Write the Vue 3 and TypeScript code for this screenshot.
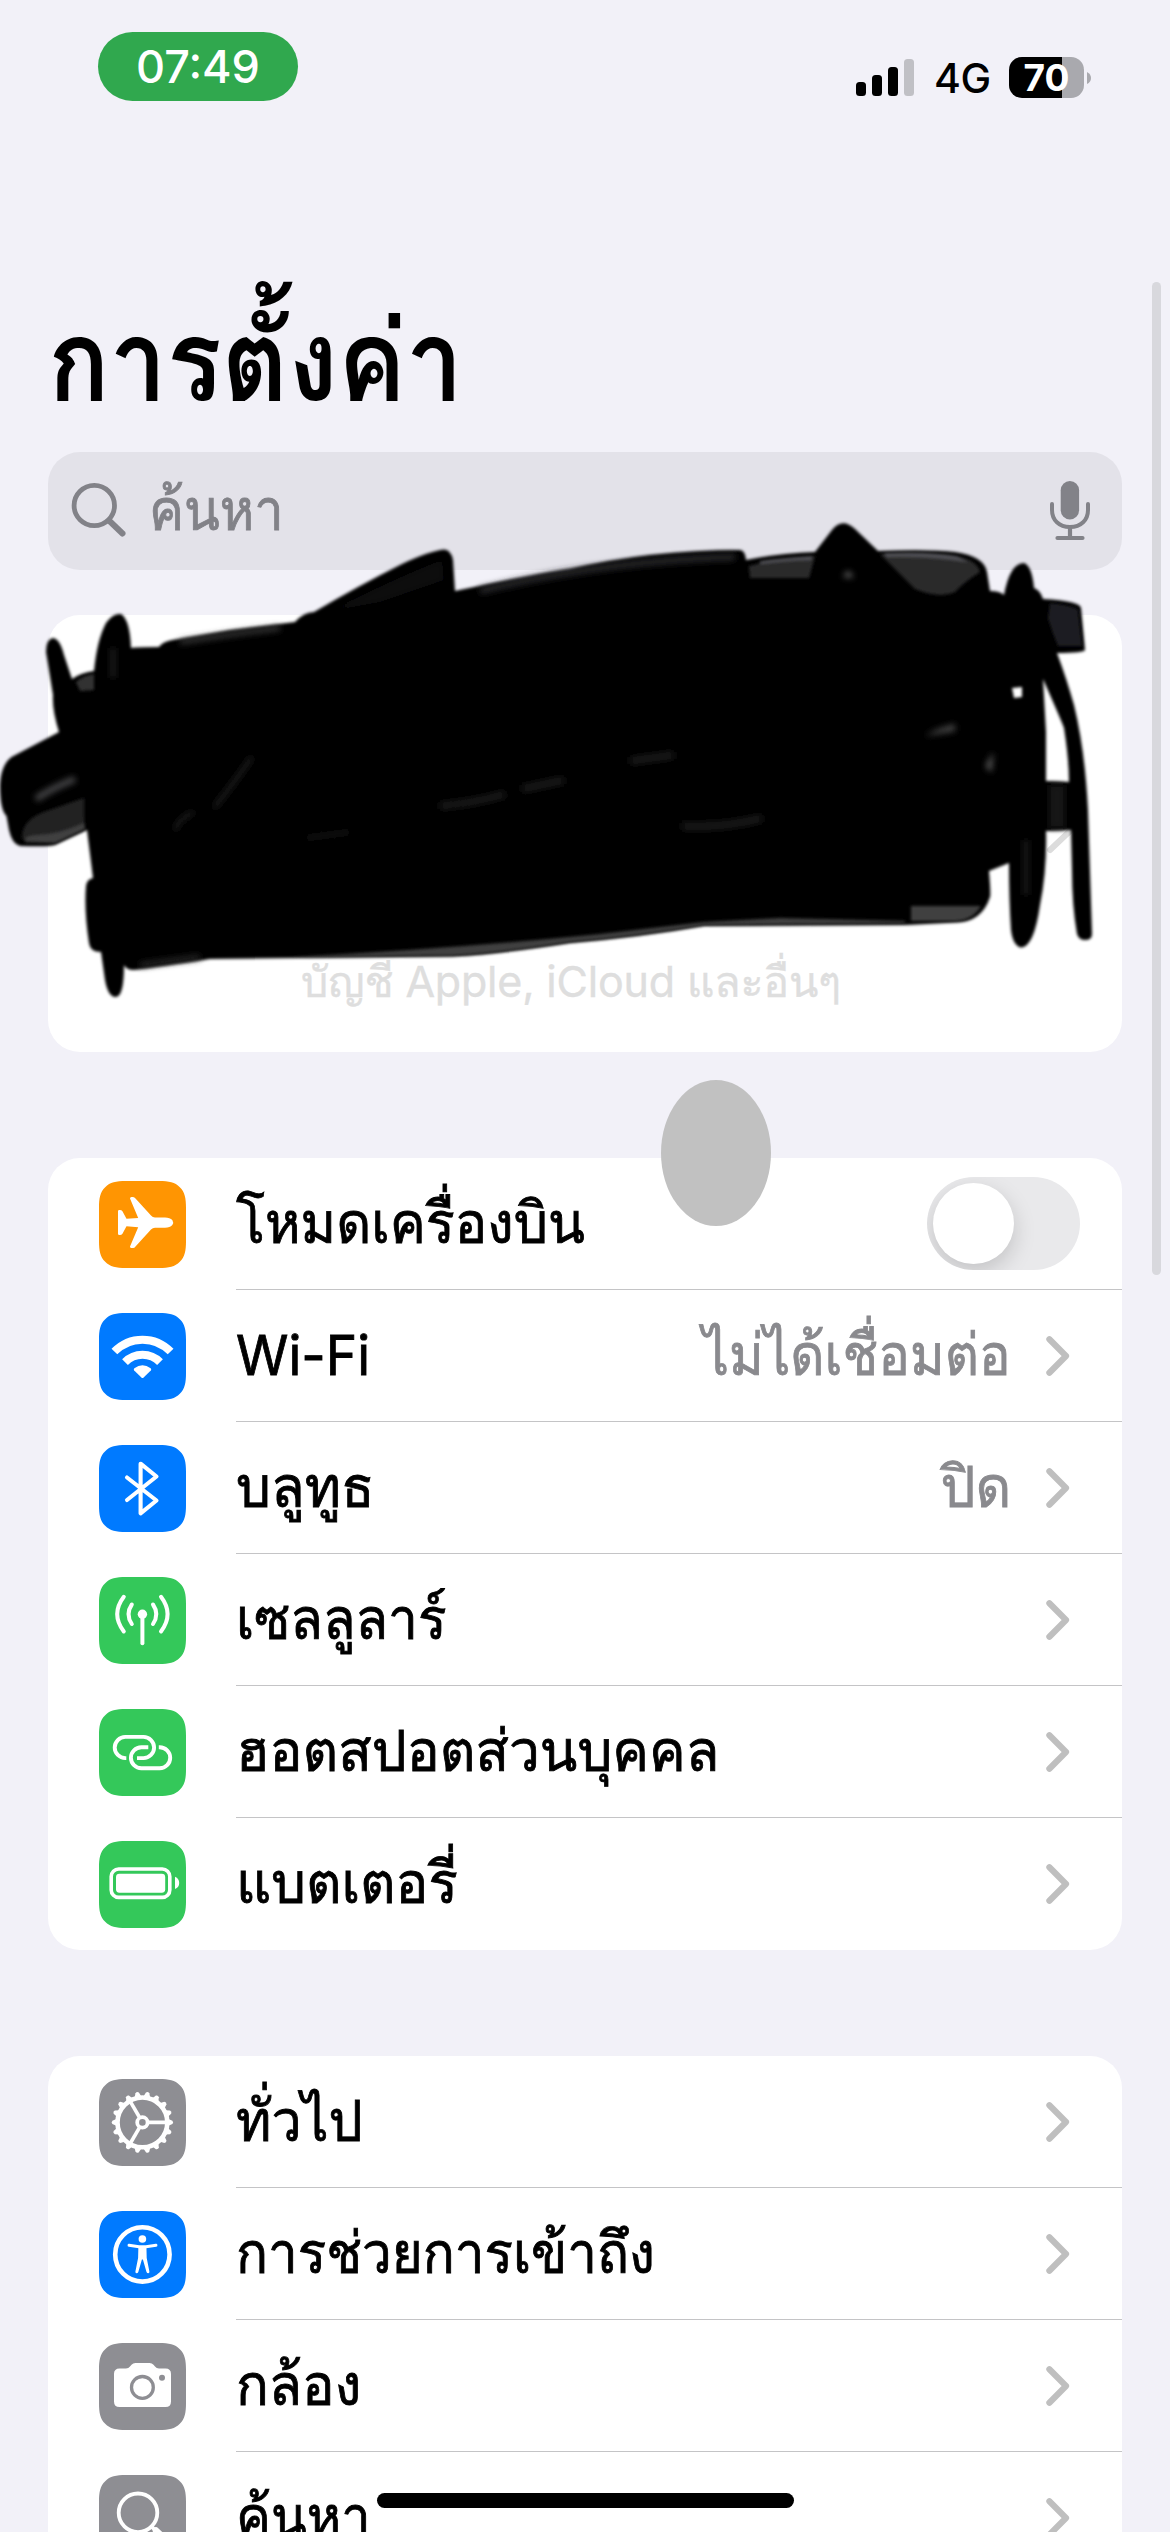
<script setup lang="ts">
type IconName =
  | 'plane' | 'wifi' | 'bluetooth' | 'antenna' | 'link' | 'battery'
  | 'gear' | 'access' | 'camera' | 'search'

interface Row {
  icon: IconName
  label: string
  color: string
  stretch: string
  value?: string
  valueStretch?: string
  toggle?: boolean
}

const ORANGE = '#ff9502'
const BLUE = '#007aff'
const GREEN = '#34c85a'
const GRAY = '#8e8e93'

const groups: Row[][] = [
  [
    { icon: 'plane', label: 'โหมดเครื่องบิน', color: ORANGE, stretch: '1, 1.07', toggle: true },
    { icon: 'wifi', label: 'Wi-Fi', color: BLUE, stretch: '0.985, 1.02', value: 'ไม่ได้เชื่อมต่อ', valueStretch: '0.976, 1.07' },
    { icon: 'bluetooth', label: 'บลูทูธ', color: BLUE, stretch: '1.02, 1.07', value: 'ปิด', valueStretch: '1.02, 1.07' },
    { icon: 'antenna', label: 'เซลลูลาร์', color: GREEN, stretch: '0.985, 1.07' },
    { icon: 'link', label: 'ฮอตสปอตส่วนบุคคล', color: GREEN, stretch: '1.018, 1.07' },
    { icon: 'battery', label: 'แบตเตอรี่', color: GREEN, stretch: '1.012, 1.07' },
  ],
  [
    { icon: 'gear', label: 'ทั่วไป', color: GRAY, stretch: '0.995, 1.07' },
    { icon: 'access', label: 'การช่วยการเข้าถึง', color: BLUE, stretch: '0.98, 1.07' },
    { icon: 'camera', label: 'กล้อง', color: GRAY, stretch: '1.005, 1.07' },
    { icon: 'search', label: 'ค้นหา', color: GRAY, stretch: '0.97, 1.07' },
  ],
]

const teeth = Array.from({ length: 18 }, (_, i) => i * 20)
const spokes = [0, 120, 240]
</script>

<template>
  <div class="screen">
    <header class="status">
      <div class="time">07:49</div>
      <div class="indicators">
        <svg class="signal" width="58" height="38" viewBox="0 0 58 38">
          <rect x="0" y="23" width="10" height="14" rx="3.5" />
          <rect x="16" y="16" width="10" height="21" rx="3.5" />
          <rect x="32" y="8" width="10" height="29" rx="3.5" />
          <rect x="48" y="0" width="10" height="37" rx="3.5" fill="#c0c0c5" />
        </svg>
        <span class="net">4G</span>
        <div class="batt"><span>70</span></div>
        <svg class="nub" width="5" height="12" viewBox="0 0 5 12"><path d="M0 0Q4 2 4 6T0 12Z" fill="#a9a9ae" /></svg>
      </div>
    </header>

    <h1 class="title">การตั้งค่า</h1>

    <div class="searchbar">
      <svg width="58" height="60" viewBox="0 0 58 60" fill="none" stroke="#828288" stroke-linecap="round">
        <circle cx="24.3" cy="24.5" r="20.2" stroke-width="4.8" />
        <path d="M39.5 40L52.5 52.5" stroke-width="6" />
      </svg>
      <span class="placeholder">ค้นหา</span>
      <svg class="mic" width="40" height="60" viewBox="0 0 40 60" fill="none" stroke="#828288" stroke-linecap="round">
        <rect x="10.7" y="0" width="18.4" height="38.5" rx="9.2" fill="#828288" stroke="none" />
        <path d="M2 23V29C2 39 9 46 20 46S38 39 38 29V23" stroke-width="4" />
        <path d="M20 46V57M7.5 57H32.5" stroke-width="4.2" />
      </svg>
    </div>

    <section class="card profile">
      <p>บัญชี Apple, iCloud และอื่นๆ</p>
    </section>

    <section v-for="(rows, g) in groups" :key="g" class="card group">
      <div v-for="row in rows" :key="row.icon" class="row">
        <svg class="tile" width="87" height="87" viewBox="0 0 87 87" fill="none" stroke="#fff" stroke-linecap="round" stroke-linejoin="round">
          <path
            d="M43.5 0H60C70 0 76 1.2 80.8 6.2C85.8 11 87 17 87 27V60C87 70 85.8 76 80.8 80.8C76 85.8 70 87 60 87H27C17 87 11 85.8 6.2 80.8C1.2 76 0 70 0 60V27C0 17 1.2 11 6.2 6.2C11 1.2 17 0 27 0Z"
            :fill="row.color" stroke="none"
          />
          <path
            v-if="row.icon === 'plane'"
            d="M31 17.5Q31 16 32.5 16H34Q35.5 16 36.5 17.5L52 34.5Q53.7 36.4 56 36.4H66Q71 36.5 73.3 39Q75 41.5 73.3 44Q71 46.6 66 46.7H56Q53.7 46.7 52 48.6L36.5 65.5Q35.5 67 34 67H32.5Q31 67 31 65.5L39.2 46.2L27.5 45.2L23.3 53Q22.5 54 21 54H20.3Q19 54 19 52.7V30.3Q19 29 20.3 29H21Q22.5 29 23.3 30L27.5 37.8L39.2 36.9Z"
            fill="#fff" stroke="none"
          />
          <g v-else-if="row.icon === 'wifi'" stroke-linecap="butt">
            <path d="M15.4 38.6A39 39 0 0 1 71.6 38.6" stroke-width="8" />
            <path d="M26 49.1A24.4 24.4 0 0 1 61 49.1" stroke-width="8" />
            <path d="M35.2 57.4Q34.2 56.3 35.4 55.3Q43.5 49 51.6 55.3Q52.8 56.3 51.8 57.4L44.6 64.5Q43.5 65.5 42.4 64.5Z" fill="#fff" stroke="none" />
          </g>
          <path v-else-if="row.icon === 'bluetooth'" d="M28 32.5L57.5 55.5L41.6 68.3V18.7L57.5 31.5L28 55" stroke-width="4.1" />
          <g v-else-if="row.icon === 'antenna'">
            <circle cx="43.4" cy="37.2" r="4.7" fill="#fff" stroke="none" />
            <path d="M43.4 38V66.2" stroke-width="4" />
            <path d="M32.8 27.5Q26.2 37.2 32.8 47M54 27.5Q60.6 37.2 54 47M24.8 19.8Q11.6 37.2 24.8 54.5M62 19.8Q75.2 37.2 62 54.5" stroke-width="4" />
          </g>
          <g v-else-if="row.icon === 'link'" stroke-width="3.9" stroke-linecap="butt">
            <path d="M27.3 49.1H26.3A10.6 10.6 0 0 1 26.3 27.9H44.5A10.6 10.6 0 0 1 44.5 49.1H38" />
            <path d="M49.3 38.2H42.4A10.5 10.5 0 0 0 42.4 59.2H60.7A10.5 10.5 0 0 0 60.7 38.2H59.8" />
          </g>
          <g v-else-if="row.icon === 'battery'">
            <rect x="12.2" y="28" width="58.6" height="28.4" rx="7.5" stroke-width="3.6" />
            <rect x="17" y="32.7" width="49.2" height="19" rx="3.4" fill="#fff" stroke="none" />
            <path d="M76 35.7Q80.2 37.4 80.2 42T76 48Z" fill="#fff" stroke="none" />
          </g>
          <g v-else-if="row.icon === 'gear'" transform="translate(43.4 43.4)">
            <circle r="24.9" stroke-width="4.6" />
            <path v-for="a in teeth" :key="a" d="M25.5 -3.6L30 -1.7Q31.6 0 30 1.7L25.5 3.6Z" :transform="`rotate(${a})`" fill="#fff" stroke="none" />
            <circle r="5.2" stroke-width="3.8" />
            <path v-for="a in spokes" :key="'s' + a" d="M6.5 0H23.5" :transform="`rotate(${a})`" stroke-width="3.6" stroke-linecap="butt" />
          </g>
          <g v-else-if="row.icon === 'access'">
            <circle cx="43.4" cy="43.4" r="27.2" stroke-width="4.6" />
            <circle cx="43.4" cy="28" r="3.8" fill="#fff" stroke="none" />
            <path d="M30 34.2L40 35.8H47L57 34.2" stroke-width="2.9" />
            <path d="M39.4 35H47.4L47.7 47L50.4 60.5Q50.6 62 49.3 62.2Q48 62.2 47.5 61L43.9 48.5H42.9L39.3 61Q38.8 62.2 37.5 62.2Q36.2 62 36.4 60.5L39.1 47Z" fill="#fff" stroke="none" />
          </g>
          <g v-else-if="row.icon === 'camera'">
            <path d="M20.5 25.5H27Q29.5 25.5 31 23.5L32.5 21.7Q34 20 36.5 20H50.5Q53 20 54.5 21.7L56 23.5Q57.5 25.5 60 25.5H66.5Q72 25.5 72 31V58.5Q72 64 66.5 64H20.5Q15 64 15 58.5V31Q15 25.5 20.5 25.5Z" fill="#fff" stroke="none" />
            <circle cx="43.4" cy="44.4" r="10.9" :stroke="row.color" stroke-width="3.3" />
            <circle cx="63" cy="34.8" r="3" :fill="row.color" stroke="none" />
          </g>
          <g v-else>
            <circle cx="39" cy="37.8" r="19.3" stroke-width="3.8" />
            <path d="M52.5 51.5L56 55" stroke-width="3.8" />
            <path d="M57 55.5L70 68" stroke-width="6.5" />
          </g>
        </svg>
        <div class="body">
          <span class="label" :style="{ transform: `scale(${row.stretch})` }">{{ row.label }}</span>
          <span v-if="row.value" class="value" :style="{ transform: `scale(${row.valueStretch})` }">{{ row.value }}</span>
          <div v-if="row.toggle" class="toggle"><i></i></div>
          <svg v-else class="chevron" width="24" height="40" viewBox="0 0 24 40" fill="none" stroke="#bfbfbf" stroke-width="6.2" stroke-linecap="round" stroke-linejoin="round">
            <path d="M3.4 3.3L20 20L3.4 36.7" />
          </svg>
        </div>
      </div>
    </section>

    <div class="scrollbar"></div>
    <div class="touch"></div>

    <!-- marker strokes covering the account card -->
    <svg class="marker" width="1170" height="560" viewBox="0 480 1170 560">
      <defs>
        <filter id="soft" x="-5%" y="-5%" width="110%" height="110%"><feGaussianBlur stdDeviation="1.8" /></filter>
        <filter id="softer" x="-20%" y="-20%" width="140%" height="140%"><feGaussianBlur stdDeviation="3" /></filter>
      </defs>
      <path d="M1050 850L1071 830" stroke="#dcdcdc" stroke-width="6" stroke-linecap="round" />
      <path
        filter="url(#soft)"
        fill-rule="evenodd"
        d="M131 648Q134 647 159 647Q162 642 172 640L230 630L295 622Q304 612 314 612Q360 585 402 564Q430 551 444 549.6Q451 550 453 560L455 591Q530 575 570 569Q650 550 740 550Q745 550 746 560Q780 553 815 552L832 530Q842 517 855 529L878 551Q930 549 955 552Q984 556 987 572L990 591Q1000 591 1004 595Q1010 563 1024 563Q1032 566 1034 588Q1040 590 1043 599Q1080 601 1081 608L1085 650Q1084 653 1057 653Q1067 680 1074 705Q1085 750 1088 810L1092 934Q1092 940 1085 940Q1079 940 1077 934Q1072 905 1072 870L1071 830L1046 831Q1047 870 1040 905Q1034 947 1021 947.5Q1013 946 1011 930Q1009 900 1009 863L989 871Q991 895 990 897Q982 922 956 922.6L907 925L704 926Q640 937 570 943Q500 954 452 956.5L210 959Q160 967 134 970Q126 970 124 965Q124 997 115.6 997Q108 997 105 980L101 952Q90 952 89 943Q84 910 86 886Q87 879 93 878L87 830L55 845Q50 847 20 846Q12 844 9 830L6.5 816Q0 810 0 785Q1 765 11.5 757L59 732Q52 710 53 695L46 652Q46 639 53 638Q60 639 64 655L72 679Q80 673 94 671Q97 640 106 623Q113 613 121 614Q130 620 131 648ZM1043 679Q1062 722 1064 728Q1069 760 1069 782L1046 781V732ZM1012 688L1022 687V697L1014 698Z"
      />
      <g filter="url(#soft)">
        <path d="M749 566Q780 558 815 556L809 578H750ZM880 554Q930 552 955 556Q976 559 980 572Q964 582 955 592Q940 599 915 589Z" fill="#2a2a2c" />
        <path d="M760 561Q780 558 812 556L811 560Q790 560 760 564ZM884 553Q930 551 957 556L968 562Q930 556 887 557Z" fill="#505054" />
        <path d="M911 906H981Q973 920 956 921H911Z" fill="#414141" />
        <path d="M290 957Q450 949 600 934L704 922L780 918L905 921V923L704 925Q640 936 570 942Q500 953 452 955.5Z" fill="#414141" />
        <path d="M22 838Q22 818 50 810L84 798V815L85 829L55 843H26Z" fill="#232324" />
        <path d="M26 841Q22 836 40 835Q60 834 84 823L85 829L55 843Z" fill="#3f3f41" />
        <path d="M1050 603Q1076 606 1078 610L1082 646H1058Q1052 632 1048 618Z" fill="#1e1e20" />
        <path d="M76 682Q84 675 94 674V690L80 691Z" fill="#333" />
      </g>
      <g filter="url(#softer)" fill="none">
        <path d="M480 591Q600 561 735 557" stroke="#2a2a2d" stroke-width="6" />
        <path d="M330 611Q400 576 442 560L444 580L380 602Z" fill="#0c0c0f" />
        <path d="M180 642Q230 634 280 628" stroke="#444" stroke-width="4" />
        <path d="M140 965Q170 961 200 957" stroke="#303030" stroke-width="4" />
        <path d="M36 799Q52 788 75 779" stroke="#4c4c4e" stroke-width="6" />
        <path d="M113 678V648" stroke="#282828" stroke-width="4" />
        <path d="M1057 785V828" stroke="#171717" stroke-width="16" />
        <path d="M843 577L848 571L854 577Z" fill="#777" />
        <path d="M925 736Q940 727 955 724V731Z" fill="#484848" />
        <path d="M986 766L993 753L991 772Z" fill="#666" stroke="#444" />
        <path d="M175 830Q179 818 194 812M214 808Q236 780 252 757" stroke="#202020" stroke-width="4" />
        <path d="M440 806Q475 803 505 794M522 789L564 780M682 826Q725 828 762 818M630 761L674 755" stroke="#1c1c1c" stroke-width="7" />
        <path d="M306 838L350 832" stroke="#161616" stroke-width="4" />
        <path d="M1026 840V895" stroke="#242424" stroke-width="4" />
      </g>
    </svg>

    <div class="home"></div>
  </div>
</template>

<style>
html, body { margin: 0; background: #f2f1f8; }
</style>

<style scoped>
.screen {
  position: relative;
  box-sizing: border-box;
  width: 1170px;
  height: 2532px;
  padding: 0 48px;
  overflow: hidden;
  display: flex;
  flex-direction: column;
  background: #f2f1f8;
  color: #000;
  font-family: Inter, Loma, sans-serif;
}
.status {
  flex: none;
  height: 304px;
  display: flex;
  justify-content: space-between;
  align-items: flex-start;
}
.time {
  margin: 32px 0 0 50px;
  width: 200px;
  height: 69px;
  border-radius: 34.5px;
  background: #30a84e;
  color: #fff;
  font-size: 45px;
  font-weight: 500;
  line-height: 69px;
  text-align: center;
}
.indicators {
  display: flex;
  align-items: center;
  height: 41px;
  margin: 57px 30px 0 0;
}
.net {
  width: 54px;
  margin: 0 21px 0 20px;
  font-size: 41px;
  font-weight: 500;
  line-height: 44px;
  letter-spacing: -0.5px;
}
.batt {
  width: 75px;
  height: 41px;
  border-radius: 13px;
  background: linear-gradient(90deg, #000 53px, #a9a9ae 53px);
  color: #fff;
  font-size: 37px;
  font-weight: 700;
  line-height: 41px;
  text-align: center;
}
.nub { margin-left: 3px; }
.title {
  flex: none;
  margin: 0;
  height: 120px;
  font-size: 100px;
  font-weight: 700;
  line-height: 120px;
  transform: scale(1.02, 1.12);
  transform-origin: 4px 96.4px;
}
.searchbar {
  flex: none;
  box-sizing: border-box;
  height: 118px;
  margin-top: 28px;
  padding: 0 32px 0 22px;
  border-radius: 32px;
  background: #e3e2e9;
  display: flex;
  align-items: center;
}
.placeholder {
  flex: 1;
  margin-left: 21px;
  color: #828288;
  font-size: 54px;
  line-height: 90px;
  transform: scale(0.97, 1.07);
  transform-origin: 0 64.7px;
  -webkit-text-stroke: 0.8px currentColor;
}
.card {
  flex: none;
  border-radius: 32px;
  background: #fff;
  overflow: hidden;
}
.profile {
  box-sizing: border-box;
  height: 437px;
  margin-top: 45px;
  padding: 0 28px 41px 0;
  display: flex;
  align-items: flex-end;
  justify-content: center;
}
.profile p {
  margin: 0;
  color: #dedede;
  font-size: 43px;
  line-height: 60px;
  letter-spacing: -0.2px;
  white-space: nowrap;
  -webkit-text-stroke: 0.4px currentColor;
}
.group { margin-top: 106px; }
.row {
  display: flex;
  align-items: center;
  height: 132px;
  padding-left: 51px;
}
.tile { flex: none; }
.body {
  flex: 1;
  box-sizing: border-box;
  height: 132px;
  margin-left: 50px;
  padding-right: 52px;
  border-bottom: 1px solid #c4c4c6;
  display: flex;
  align-items: center;
}
.row:last-child .body { border-bottom-color: transparent; }
.label,
.value {
  font-size: 54px;
  line-height: 90px;
  white-space: nowrap;
  transform-origin: 0 64.7px;
  -webkit-text-stroke: 0.8px currentColor;
}
.label { flex: 1; }
.value {
  margin-right: 35px;
  color: #8a8a8e;
  transform-origin: 100% 64.7px;
}
.toggle {
  box-sizing: border-box;
  width: 153px;
  height: 93px;
  margin-right: -10px;
  padding: 6px;
  border-radius: 47px;
  background: #e9e9eb;
  overflow: hidden;
}
.toggle i {
  display: block;
  width: 81px;
  height: 81px;
  border-radius: 50%;
  background: #fff;
  box-shadow: 0 8px 22px rgba(0, 0, 0, 0.17);
}
.scrollbar {
  position: absolute;
  top: 282px;
  right: 9px;
  width: 9px;
  height: 993px;
  border-radius: 5px;
  background: #d8d8dd;
}
.touch {
  position: absolute;
  top: 1080px;
  left: 661px;
  width: 110px;
  height: 146px;
  border-radius: 50%;
  background: #c1c1c1;
}
.marker {
  position: absolute;
  top: 480px;
  left: 0;
}
.home {
  position: absolute;
  bottom: 24px;
  left: 377px;
  width: 417px;
  height: 15px;
  border-radius: 8px;
  background: #000;
}
</style>
